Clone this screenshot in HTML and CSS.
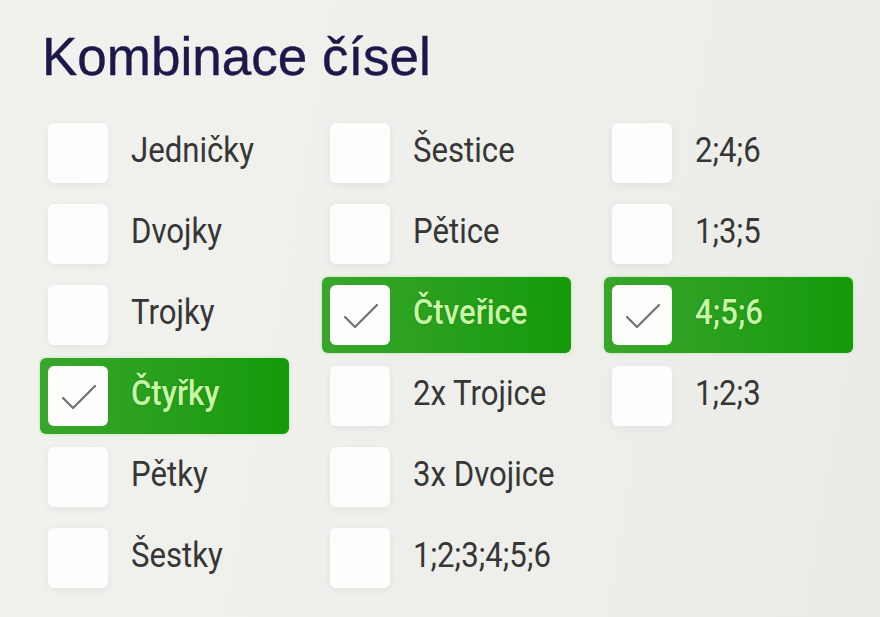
FILE: index.html
```html
<!DOCTYPE html>
<html lang="cs">
<head>
<meta charset="utf-8">
<link rel="stylesheet" href="styles.css">
</head>
<body>
<div class="panel">
  <h1 class="title">Kombinace čísel</h1>
  <div class="grid">
    <div class="col">
      <div class="item"><span class="box"></span><span class="label">Jedničky</span></div>
      <div class="item"><span class="box"></span><span class="label">Dvojky</span></div>
      <div class="item"><span class="box"></span><span class="label">Trojky</span></div>
      <div class="item checked"><span class="box"><svg viewBox="0 0 60 60" class="tick"><path d="M15 32 L25 42 L47 20"/></svg></span><span class="label">Čtyřky</span></div>
      <div class="item"><span class="box"></span><span class="label">Pětky</span></div>
      <div class="item"><span class="box"></span><span class="label">Šestky</span></div>
    </div>
    <div class="col">
      <div class="item"><span class="box"></span><span class="label">Šestice</span></div>
      <div class="item"><span class="box"></span><span class="label">Pětice</span></div>
      <div class="item checked"><span class="box"><svg viewBox="0 0 60 60" class="tick"><path d="M15 32 L25 42 L47 20"/></svg></span><span class="label">Čtveřice</span></div>
      <div class="item"><span class="box"></span><span class="label">2x Trojice</span></div>
      <div class="item"><span class="box"></span><span class="label">3x Dvojice</span></div>
      <div class="item"><span class="box"></span><span class="label">1;2;3;4;5;6</span></div>
    </div>
    <div class="col">
      <div class="item"><span class="box"></span><span class="label">2;4;6</span></div>
      <div class="item"><span class="box"></span><span class="label">1;3;5</span></div>
      <div class="item checked"><span class="box"><svg viewBox="0 0 60 60" class="tick"><path d="M15 32 L25 42 L47 20"/></svg></span><span class="label">4;5;6</span></div>
      <div class="item"><span class="box"></span><span class="label">1;2;3</span></div>
    </div>
  </div>
</div>
</body>
</html>
```
FILE: styles.css
```css
html, body {
  margin: 0;
  padding: 0;
}
body {
  width: 880px;
  height: 617px;
  overflow: hidden;
  background: linear-gradient(100deg, #f1f1ed 0%, #eeeeea 60%, #ebebe7 100%);
}
.panel {
  padding: 26px 0 0 40px;
}
.title {
  margin: 0 0 0 2px;
  font-family: "Liberation Sans", Arial, sans-serif;
  font-weight: 400;
  font-size: 53px;
  line-height: 62px;
  letter-spacing: 0;
  color: #1c184a;
  -webkit-text-stroke: 0.4px #1c184a;
}
.grid {
  display: grid;
  grid-template-columns: 249px 249px 249px;
  column-gap: 33px;
  margin-top: 27px;
}
.col {
  display: flex;
  flex-direction: column;
  gap: 5px;
}
.item {
  display: flex;
  align-items: center;
  height: 76px;
  padding: 0 8px;
  box-sizing: border-box;
  border-radius: 6px;
}
.box {
  flex: none;
  width: 60px;
  height: 60px;
  border-radius: 6px;
  background: #fdfdfb;
  box-shadow: 0 2px 8px rgba(0, 0, 0, 0.06);
  display: flex;
}
.tick {
  width: 60px;
  height: 60px;
}
.tick path {
  fill: none;
  stroke: #6f736f;
  stroke-width: 2.2;
  stroke-linecap: round;
  stroke-linejoin: round;
}
.label {
  display: inline-block;
  margin-left: 23px;
  margin-top: -6px;
  font-family: Roboto, "Liberation Sans", sans-serif;
  font-size: 35px;
  white-space: nowrap;
  transform: scaleX(0.89);
  transform-origin: left center;
  color: #363636;
}
.checked {
  background: linear-gradient(90deg, #3aa52c 0%, #28a01c 50%, #149a0a 100%);
  box-shadow: 0 0 3px rgba(120, 230, 90, 0.6);
}
.checked .box {
  box-shadow: none;
}
.checked .label {
  color: #c6f7a6;
  font-weight: 500;
  text-shadow: 0 0 2px #1d6a12;
}
```
